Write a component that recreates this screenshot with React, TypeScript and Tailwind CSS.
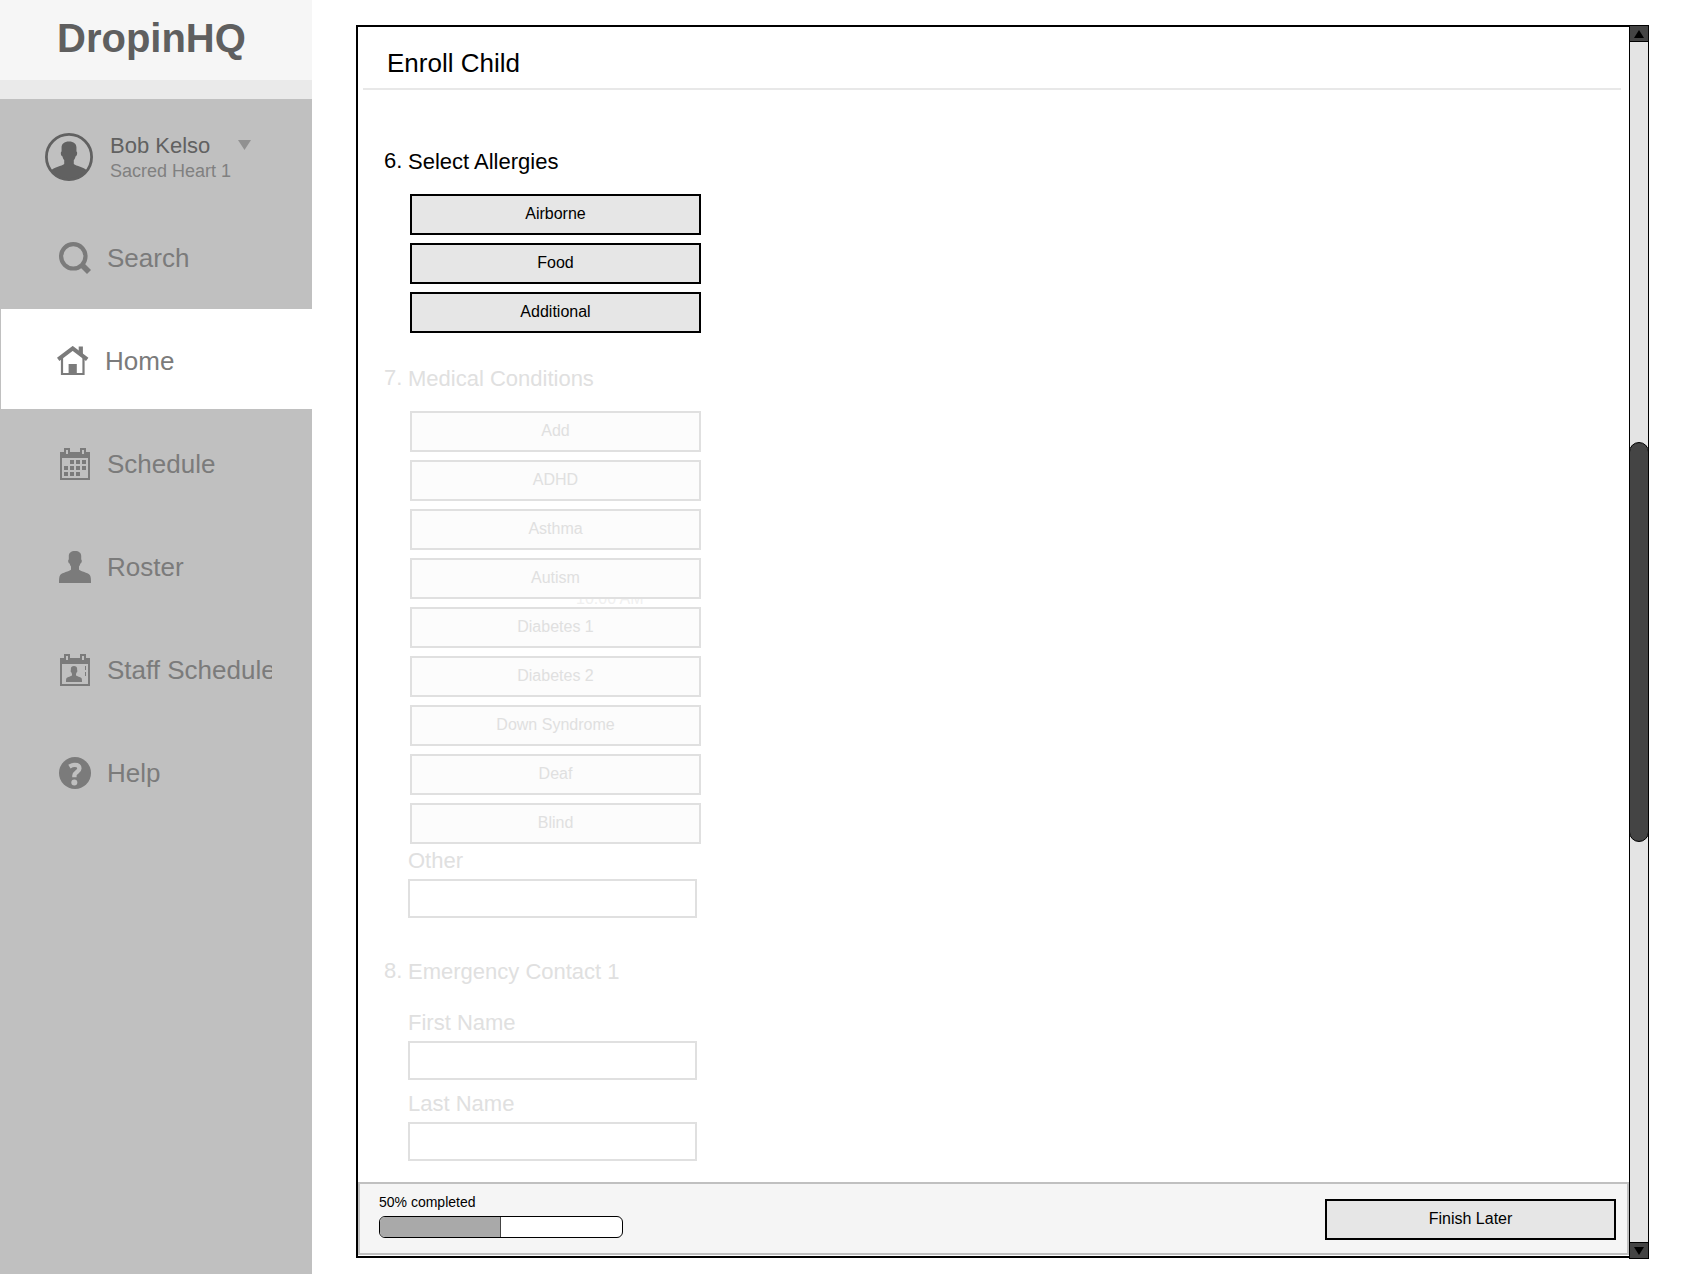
import type { ReactNode } from "react"

const personPath =
  "M16 0C12 0 9.8 2 9.8 5v3.4C8.8 8.6 9 12 10.6 12.4c.3 1.4.8 2.4 1.4 3.1v3.3C10 20.5 3.5 21.6 1.2 23.9 0 25.2 0 29 0 32h32c0-3 0-6.8-1.2-8.1-2.3-2.3-8.8-3.4-10.8-5.1v-3.3c.6-.7 1.1-1.7 1.4-3.1 1.6-.4 1.8-3.8.8-4V5c0-3-2.2-5-6.2-5z"

function AvatarIcon() {
  return (
    <svg width="48" height="48" viewBox="0 0 48 48" fill="#616161" aria-hidden="true">
      <clipPath id="avatar-clip">
        <circle cx="24" cy="24" r="23" />
      </clipPath>
      <g clipPath="url(#avatar-clip)">
        <path d={personPath} transform="translate(4.8 8.5) scale(1.2 1.2)" />
      </g>
      <circle cx="24" cy="24" r="22.6" fill="none" stroke="#616161" strokeWidth="2.8" />
    </svg>
  )
}

function SearchIcon() {
  return (
    <svg width="32" height="32" viewBox="0 0 32 32" fill="none" stroke="currentColor" aria-hidden="true">
      <circle cx="14.3" cy="14.3" r="12.2" strokeWidth="4.2" />
      <path d="M22.5 22.5L30 30" strokeWidth="5.6" />
    </svg>
  )
}

function HomeIcon() {
  return (
    <svg width="32" height="30" viewBox="0 0 32 30" fill="currentColor" aria-hidden="true">
      <path d="M21.7 0.5h4.2v8h-4.2z" />
      <path d="M1.2 13.4L15.7 2.4l14.5 11" fill="none" stroke="currentColor" strokeWidth="4" />
      <path d="M5 12v16h21.5V12" fill="none" stroke="currentColor" strokeWidth="2.2" />
      <path d="M11.6 18h8.2v10h-8.2z" />
    </svg>
  )
}

function CalendarFrame({ children }: { children: ReactNode }) {
  return (
    <svg width="30" height="32" viewBox="0 0 30 32" fill="currentColor" aria-hidden="true">
      <path
        fillRule="evenodd"
        d="M0 4h4V0h6v4h10V0h6v4h4v28H0zM2 10v20h26V10zM6 2v4h2V2zM22 2v4h2V2z"
      />
      {children}
    </svg>
  )
}

function ScheduleIcon() {
  return (
    <CalendarFrame>
      <path d="M10 12h4v4h-4zM16 12h4v4h-4zM22 12h4v4h-4zM4 18h4v4H4zM10 18h4v4h-4zM16 18h4v4h-4zM22 18h4v4h-4zM4 24h4v4H4zM10 24h4v4h-4zM16 24h4v4h-4z" />
    </CalendarFrame>
  )
}

function RosterIcon() {
  return (
    <svg width="32" height="32" viewBox="0 0 32 32" fill="currentColor" aria-hidden="true">
      <path d={personPath} />
    </svg>
  )
}

function StaffIcon() {
  return (
    <CalendarFrame>
      <path d={personPath} transform="translate(6 12) scale(.5)" />
      <path d="M25 12h1v4h-1zM25 18h1v4h-1z" />
    </CalendarFrame>
  )
}

function HelpIcon() {
  return (
    <svg width="32" height="32" viewBox="0 0 32 32" aria-hidden="true">
      <circle cx="16" cy="16" r="16" fill="currentColor" />
      <path
        d="M10.4 9.6c2-1.2 3.8-1.7 5.4-1.7 2.9 0 4.6 1.3 4.6 3.5 0 3.5-5 3.6-5 7.2v1.6"
        fill="none"
        stroke="#c0c0c0"
        strokeWidth="4.4"
      />
      <circle cx="15.3" cy="25.6" r="3" fill="#c0c0c0" />
    </svg>
  )
}

const navItems = [
  { label: "Search", icon: <SearchIcon /> },
  { label: "Home", icon: <HomeIcon />, active: true },
  { label: "Schedule", icon: <ScheduleIcon /> },
  { label: "Roster", icon: <RosterIcon /> },
  { label: "Staff Schedule", icon: <StaffIcon /> },
  { label: "Help", icon: <HelpIcon /> },
]

const allergies = ["Airborne", "Food", "Additional"]

const conditions = [
  "Add",
  "ADHD",
  "Asthma",
  "Autism",
  "Diabetes 1",
  "Diabetes 2",
  "Down Syndrome",
  "Deaf",
  "Blind",
]

function Sidebar() {
  return (
    <aside className="w-[312px] shrink-0 bg-[#c0c0c0]">
      <div className="h-20 bg-[#f6f6f6] pl-[57px] pt-[13px]">
        <h1 className="text-[40px] leading-[50px] font-bold text-[#5f5f5f]">DropinHQ</h1>
      </div>
      <div className="h-[19px] bg-[#eaeaea]" />

      <div className="flex h-[107px] items-start pl-[45px] pt-[34px]">
        <AvatarIcon />
        <div className="ml-[17px] w-32 pt-px">
          <p className="text-[22px] leading-6 text-[#616161]">Bob Kelso</p>
          <p className="text-lg leading-[26px] whitespace-nowrap text-[#808080]">Sacred Heart 1</p>
        </div>
        <button type="button" aria-label="Switch account" className="pt-[7px]">
          <svg width="13" height="10" viewBox="0 0 13 10" fill="#919191">
            <path d="M0 0h13L6.5 10z" />
          </svg>
        </button>
      </div>

      <nav className="flex flex-col gap-[3px]">
        {navItems.map((item) => (
          <a
            key={item.label}
            href="#"
            aria-current={item.active ? "page" : undefined}
            className={
              item.active
                ? "ml-px flex h-[100px] items-center bg-white pl-14 pr-10 pt-1 text-[#7b7b7b]"
                : "ml-px flex h-[100px] items-center pl-[58px] pr-10 pt-1 text-[#7b7b7b]"
            }
          >
            <span className="flex w-8 shrink-0 justify-center">{item.icon}</span>
            <span className="ml-4 overflow-hidden text-[26px] leading-8 whitespace-nowrap">{item.label}</span>
          </a>
        ))}
      </nav>
    </aside>
  )
}

function SectionTitle({ number, children }: { number: number; children: ReactNode }) {
  return (
    <h3 className="flex items-start text-[22px]">
      <span className="w-6 leading-[26px]">{number}.</span>
      <span className="leading-7">{children}</span>
    </h3>
  )
}

function OptionButton({ children, muted }: { children: ReactNode; muted?: boolean }) {
  return (
    <button
      type="button"
      disabled={muted}
      className={
        muted
          ? "relative z-10 block h-[41px] w-[291px] border-2 border-[#e0e0e0] bg-[#fcfcfc] pb-px text-base text-[#e0e0e0]"
          : "block h-[41px] w-[291px] border-2 border-black bg-[#e6e6e6] pb-px text-base text-black"
      }
    >
      {children}
    </button>
  )
}

function Field({ id, label }: { id: string; label: string }) {
  return (
    <div className="pl-6">
      <label htmlFor={id} className="block text-[22px] leading-7">
        {label}
      </label>
      <input
        id={id}
        type="text"
        disabled
        className="mt-1 block h-[39px] w-[289px] border-2 border-[#e0e0e0] bg-white px-2 text-base"
      />
    </div>
  )
}

function EnrollForm() {
  return (
    <form className="min-h-0 flex-1 overflow-hidden pl-[26px] pt-[58px]">
      <section>
        <SectionTitle number={6}>Select Allergies</SectionTitle>
        <ul className="mt-[18px] flex flex-col gap-2 pl-[26px]">
          {allergies.map((name) => (
            <li key={name}>
              <OptionButton>{name}</OptionButton>
            </li>
          ))}
        </ul>
      </section>

      <section className="mt-8 text-[#e0e0e0]">
        <SectionTitle number={7}>Medical Conditions</SectionTitle>
        <ul className="mt-[18px] flex flex-col gap-2 pl-[26px]">
          {conditions.map((name) => (
            <li key={name} className="relative">
              {/* time label left underneath the row */}
              {name === "Autism" && (
                <span className="absolute left-[166px] top-[29px] text-base leading-6 text-[#f0f0f0]">10:00 AM</span>
              )}
              <OptionButton muted>{name}</OptionButton>
            </li>
          ))}
        </ul>
        <div className="mt-[3px]">
          <Field id="other" label="Other" />
        </div>
      </section>

      <section className="mt-10 text-[#e0e0e0]">
        <SectionTitle number={8}>Emergency Contact 1</SectionTitle>
        <div className="mt-[23px] flex flex-col gap-[10px]">
          <Field id="first-name" label="First Name" />
          <Field id="last-name" label="Last Name" />
        </div>
      </section>
    </form>
  )
}

function Footer() {
  return (
    <footer className="mb-px flex h-[73px] shrink-0 items-start justify-between border-2 border-[#c0c0c0] bg-[#f5f5f5] pl-[19px] pr-[11px]">
      <div className="pt-2">
        <p className="mb-1 text-sm leading-5">50% completed</p>
        <div
          role="progressbar"
          aria-label="Enrollment progress"
          aria-valuenow={50}
          className="h-[22px] w-[244px] overflow-hidden rounded-md border border-black bg-white"
        >
          <div className="h-full w-1/2 border-r border-[#444444] bg-[#a9a9a9]" />
        </div>
      </div>
      <div className="pt-[15px]">
        <OptionButton>Finish Later</OptionButton>
      </div>
    </footer>
  )
}

function ScrollBar() {
  return (
    <div className="-mb-px flex w-5 shrink-0 flex-col border border-black bg-[#e4e4e4]">
      <button
        type="button"
        aria-label="Scroll up"
        className="flex h-4 shrink-0 items-center justify-center border-b border-black bg-[#444444]"
      >
        <svg width="10" height="8" viewBox="0 0 10 8">
          <path d="M5 0l5 8H0z" />
        </svg>
      </button>
      <div className="-mx-px flex flex-1 flex-col justify-center">
        <div className="h-1/3 rounded-[10px] border border-black bg-[#444444]" />
      </div>
      <button
        type="button"
        aria-label="Scroll down"
        className="flex h-4 shrink-0 items-center justify-center border-t border-black bg-[#444444]"
      >
        <svg width="10" height="8" viewBox="0 0 10 8">
          <path d="M5 8l5-8H0z" />
        </svg>
      </button>
    </div>
  )
}

export default function App() {
  return (
    <div className="flex h-screen bg-white font-['Liberation_Sans',Arial,sans-serif] text-black">
      <Sidebar />

      <main className="flex min-w-0 flex-1 pb-4 pl-11 pr-[34px] pt-[25px]">
        <div className="flex min-w-0 flex-1 flex-col border-y-2 border-l-2 border-black">
          <div className="ml-[5px] mr-2 border-b-2 border-[#e8e8e8] pb-[7px] pl-6 pt-[18px]">
            <h2 className="text-[26px] leading-9">Enroll Child</h2>
          </div>
          <EnrollForm />
          <Footer />
        </div>
        <ScrollBar />
      </main>
    </div>
  )
}
